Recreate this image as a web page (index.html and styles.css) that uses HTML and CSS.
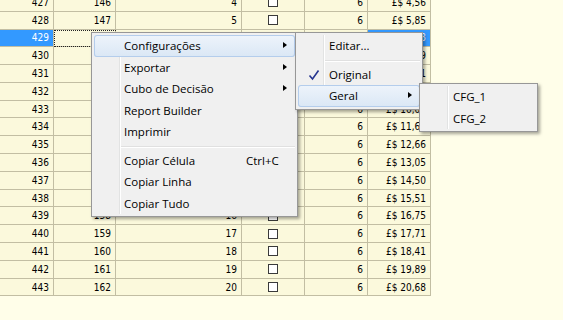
FILE: index.html
```html
<!DOCTYPE html>
<html>
<head>
    <title>Grade</title>
    <meta charset="UTF-8">
    <link rel="stylesheet" href="styles.css">
</head>
<body>
    <div class="grid">
        <div class="row"><span>427</span><span>146</span><span>4</span><span class="chk"><i></i></span><span>6</span><span>£$ 4,56</span></div>
        <div class="row"><span>428</span><span>147</span><span>5</span><span class="chk"><i></i></span><span>6</span><span>£$ 5,85</span></div>
        <div class="row sel"><span>429</span><span class="focus">148</span><span>6</span><span class="chk"><i></i></span><span>6</span><span>£$ 6,93</span></div>
        <div class="row"><span>430</span><span>149</span><span>7</span><span class="chk"><i></i></span><span>6</span><span>£$ 7,79</span></div>
        <div class="row"><span>431</span><span>150</span><span>8</span><span class="chk"><i></i></span><span>6</span><span>£$ 8,71</span></div>
        <div class="row"><span>432</span><span>151</span><span>9</span><span class="chk"><i></i></span><span>6</span><span>£$ 9,40</span></div>
        <div class="row"><span>433</span><span>152</span><span>10</span><span class="chk"><i></i></span><span>6</span><span>£$ 10,02</span></div>
        <div class="row"><span>434</span><span>153</span><span>11</span><span class="chk"><i></i></span><span>6</span><span>£$ 11,64</span></div>
        <div class="row"><span>435</span><span>154</span><span>12</span><span class="chk"><i></i></span><span>6</span><span>£$ 12,66</span></div>
        <div class="row"><span>436</span><span>155</span><span>13</span><span class="chk"><i></i></span><span>6</span><span>£$ 13,05</span></div>
        <div class="row"><span>437</span><span>156</span><span>14</span><span class="chk"><i></i></span><span>6</span><span>£$ 14,50</span></div>
        <div class="row"><span>438</span><span>157</span><span>15</span><span class="chk"><i></i></span><span>6</span><span>£$ 15,51</span></div>
        <div class="row"><span>439</span><span>158</span><span>16</span><span class="chk"><i></i></span><span>6</span><span>£$ 16,75</span></div>
        <div class="row"><span>440</span><span>159</span><span>17</span><span class="chk"><i></i></span><span>6</span><span>£$ 17,71</span></div>
        <div class="row"><span>441</span><span>160</span><span>18</span><span class="chk"><i></i></span><span>6</span><span>£$ 18,41</span></div>
        <div class="row"><span>442</span><span>161</span><span>19</span><span class="chk"><i></i></span><span>6</span><span>£$ 19,89</span></div>
        <div class="row"><span>443</span><span>162</span><span>20</span><span class="chk"><i></i></span><span>6</span><span>£$ 20,68</span></div>
    </div>

    <!-- menu de contexto -->
    <div class="menu menu-main">
        <div class="item hot"><span>Configurações</span><span></span><b class="arrow"></b></div>
        <div class="item"><span>Exportar</span><span></span><b class="arrow"></b></div>
        <div class="item"><span>Cubo de Decisão</span><span></span><b class="arrow"></b></div>
        <div class="item"><span>Report Builder</span></div>
        <div class="item"><span>Imprimir</span></div>
        <div class="sep"></div>
        <div class="item"><span>Copiar Célula</span><span>Ctrl+C</span></div>
        <div class="item"><span>Copiar Linha</span></div>
        <div class="item"><span>Copiar Tudo</span></div>
    </div>

    <div class="menu menu-conf">
        <div class="item"><span>Editar...</span></div>
        <div class="sep"></div>
        <div class="item">
            <svg class="check" width="12" height="12" viewBox="0 0 12 12"><path d="M1.5 6.5 L4.5 10 L10.5 1.5" fill="none" stroke="#26358f" stroke-width="1.6"/></svg>
            <span>Original</span>
        </div>
        <div class="item hot"><span>Geral</span><span></span><b class="arrow"></b></div>
    </div>

    <div class="menu menu-geral">
        <div class="item"><span>CFG_1</span></div>
        <div class="item"><span>CFG_2</span></div>
    </div>
</body>
</html>
```

FILE: styles.css
```css
body {
    margin: 0;
    background: #fffee9;
    overflow: hidden;
    font-family: 'DejaVu Sans Condensed', 'DejaVu Sans', sans-serif;
    font-stretch: condensed;
    font-size: 10px;
    color: #000;
}
.grid {
    margin-top: -6.1px;
    width: 431px;
}
.row {
    display: grid;
    grid-template-columns: 54px 62px 126px 63px 63px 63px;
    height: 17.8px;
}
.row span {
    display: flex;
    align-items: center;
    justify-content: flex-end;
    padding-right: 4px;
    background: #fbf9dc;
    border-right: 1px solid #c2bea3;
    border-bottom: 1px solid #c2bea3;
    white-space: nowrap;
    overflow: hidden;
}
.row span.chk {
    justify-content: center;
    padding-right: 0;
}
.chk i {
    display: block;
    width: 8px;
    height: 8px;
    border: 1px solid #3a3a3a;
    background: #fff;
}
.row.sel span:first-child,
.row.sel span:last-child {
    background: #3399ff;
    color: #fff;
}
.row span.focus {
    outline: 1px dotted #222;
    outline-offset: -1px;
}

/* menus */
.menu {
    position: absolute;
    box-sizing: border-box;
    background: #f0f0f0;
    border: 1px solid #979797;
    padding: 2px;
    box-shadow: 2px 2px 3px rgba(0, 0, 0, 0.35);
    font-family: 'Open Sans', 'Noto Sans', sans-serif;
    font-stretch: normal;
    font-size: 11.5px;
    color: #000;
}
.menu::before {
    content: '';
    position: absolute;
    top: 2px;
    bottom: 2px;
    left: 27px;
    width: 1px;
    background: #e2e3e3;
    box-shadow: 1px 0 0 #fff;
}
.menu-main { left: 91px; top: 32px; width: 207px; }
.menu-conf { left: 295px; top: 32px; width: 128px; }
.menu-geral { left: 419px; top: 83px; width: 119px; }

.item {
    position: relative;
    display: grid;
    grid-template-columns: 122px 1fr;
    align-items: center;
    height: 21.5px;
    padding-left: 30px;
    border-radius: 3px;
}
.menu-conf .item, .menu-geral .item { padding-left: 31px; }
.item.hot {
    background: linear-gradient(#eef4fb, #dae7f5);
    box-shadow: inset 0 0 0 1px #b4cdec;
}
.arrow {
    position: absolute;
    right: 8px;
    top: 7px;
    width: 0;
    height: 0;
    border-left: 4px solid #000;
    border-top: 3.5px solid transparent;
    border-bottom: 3.5px solid transparent;
}
.check {
    position: absolute;
    left: 10px;
    top: 5px;
}
.sep {
    height: 7px;
    margin-left: 25px;
    background: linear-gradient(#e0e0e0, #e0e0e0) 0 3px / 100% 1px no-repeat,
                linear-gradient(#fff, #fff) 0 4px / 100% 1px no-repeat;
}
```
